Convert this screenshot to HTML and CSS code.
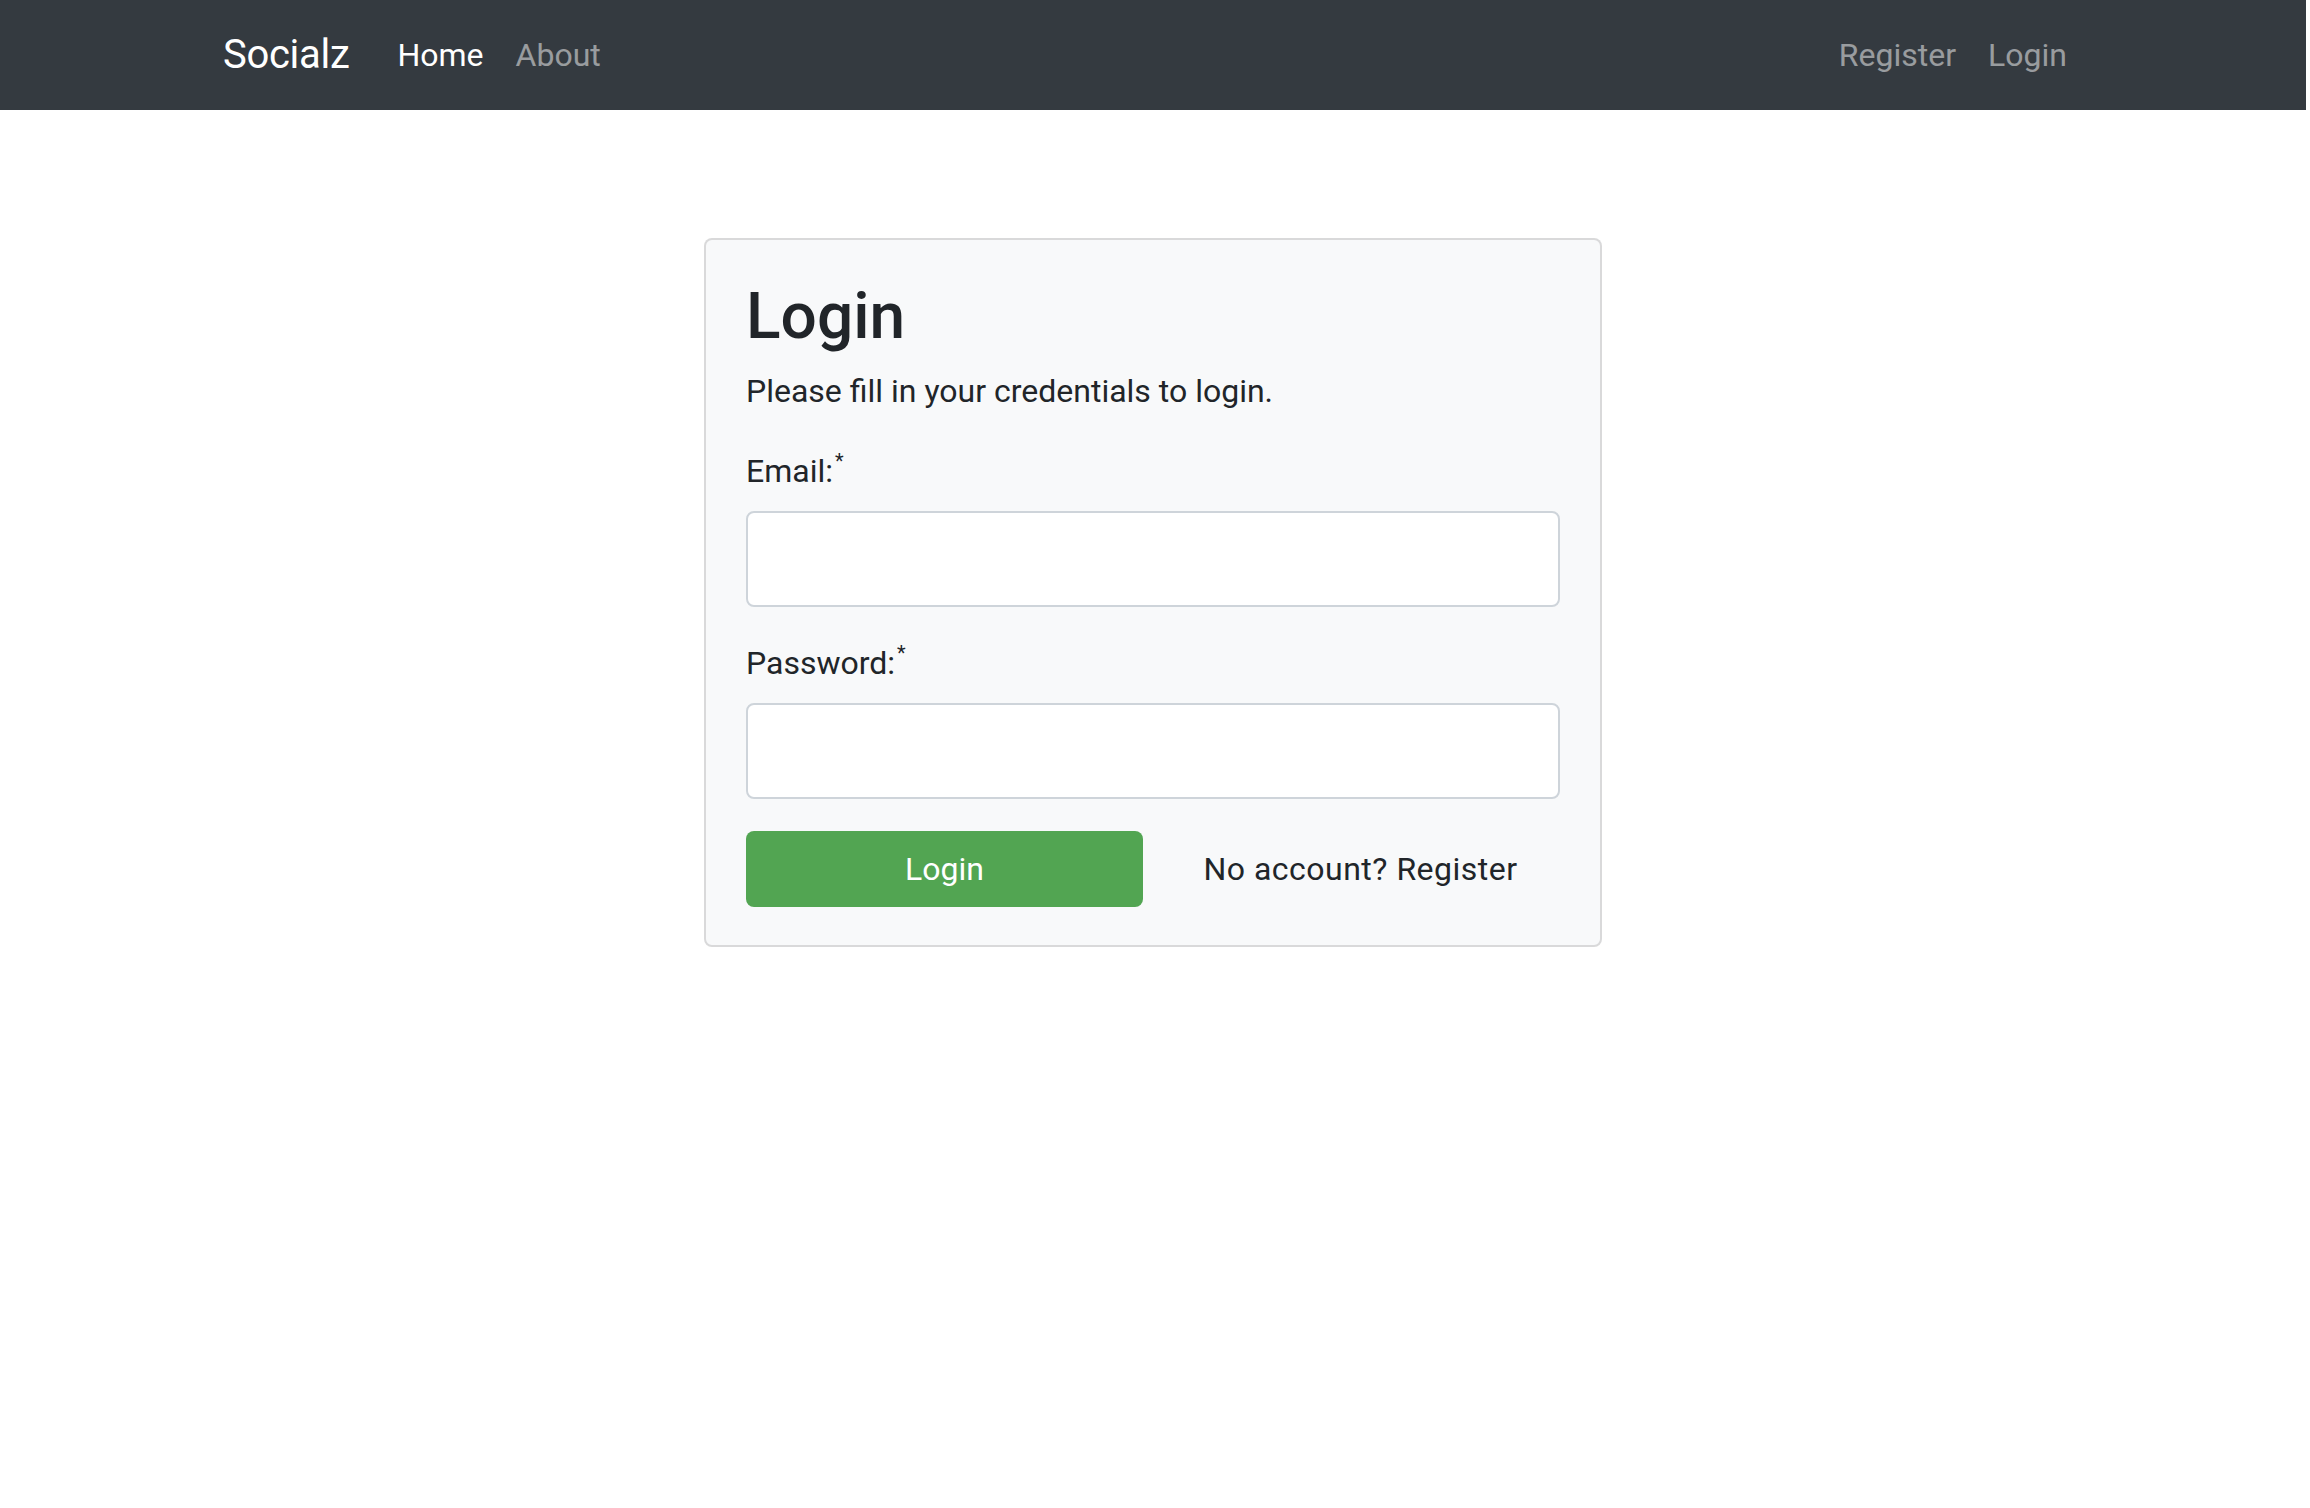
FILE: index.html
```html
<!DOCTYPE html>
<html lang="en">
<head>
<meta charset="utf-8">
<title>Socialz - Login</title>
<link rel="stylesheet" href="styles.css">
</head>
<body>
<div class="page">
<nav class="navbar">
  <div class="container nav-inner">
    <a class="brand" href="#">Socialz</a>
    <ul class="nav-list">
      <li><a class="nav-link active" href="#">Home</a></li>
      <li><a class="nav-link" href="#">About</a></li>
    </ul>
    <ul class="nav-list nav-right">
      <li><a class="nav-link" href="#">Register</a></li>
      <li><a class="nav-link" href="#">Login</a></li>
    </ul>
  </div>
</nav>
<main class="container">
  <div class="card">
    <h2 class="title">Login</h2>
    <p class="lead">Please fill in your credentials to login.</p>
    <form class="form">
      <div class="group">
        <label class="label" for="email">Email:<sup class="req">*</sup></label>
        <input class="input" type="email" id="email">
      </div>
      <div class="group">
        <label class="label" for="password">Password:<sup class="req">*</sup></label>
        <input class="input" type="password" id="password">
      </div>
      <div class="actions">
        <button class="btn" type="button">Login</button>
        <a class="alt-link" href="#">No account? Register</a>
      </div>
    </form>
  </div>
</main>
</div>
</body>
</html>
```
FILE: styles.css
```css
* { box-sizing: border-box; }
html, body {
  margin: 0;
  padding: 0;
  background: #ffffff;
  font-family: Roboto, "Liberation Sans", Arial, sans-serif;
  color: #212529;
}
a { text-decoration: none; }
.page {
  width: 2306px;
}
.container {
  width: 1920px;
  margin: 0 auto;
  padding: 0 30px;
}
.navbar {
  background: #343a40;
  height: 110px;
}
.nav-inner {
  display: flex;
  align-items: center;
  height: 110px;
}
.brand {
  color: #ffffff;
  font-size: 40px;
  line-height: 60px;
  margin-right: 32px;
  letter-spacing: -0.3px;
}
.nav-list {
  display: flex;
  list-style: none;
  margin: 0;
  padding: 0;
}
.nav-right { margin-left: auto; }
.nav-link {
  display: block;
  padding: 0 16px;
  font-size: 32px;
  line-height: 48px;
  color: rgba(255, 255, 255, 0.5);
}
.nav-link.active { color: #ffffff; }
.card {
  width: 898px;
  margin: 128px auto 0;
  background: #f8f9fa;
  border: 2px solid rgba(0, 0, 0, 0.125);
  border-radius: 8px;
  padding: 39px 40px 38px;
}
.title {
  margin: 0 0 11px;
  font-size: 64px;
  font-weight: 500;
  line-height: 1.2;
}
.lead {
  margin: 0 0 32px;
  font-size: 32px;
  line-height: 48px;
}
.form { margin: 0; }
.group { margin-bottom: 32px; }
.label {
  display: block;
  font-size: 32px;
  line-height: 48px;
  margin-bottom: 16px;
}
.req {
  font-size: 20px;
  line-height: 0;
  vertical-align: 14px;
  margin-left: 2px;
}
.input {
  display: block;
  width: 100%;
  height: 96px;
  background: #ffffff;
  border: 2px solid #ced4da;
  border-radius: 8px;
  padding: 0 32px;
  font-size: 40px;
}
.actions {
  display: grid;
  grid-template-columns: 397px 1fr;
  align-items: center;
}
.btn {
  height: 76px;
  background: #52a552;
  color: #ffffff;
  border: none;
  border-radius: 8px;
  font-family: Roboto, "Liberation Sans", Arial, sans-serif;
  font-size: 32px;
}
.alt-link {
  justify-self: center;
  color: #212529;
  font-size: 32px;
  line-height: 48px;
  margin-left: 18px;
  letter-spacing: 0.5px;
}
```
